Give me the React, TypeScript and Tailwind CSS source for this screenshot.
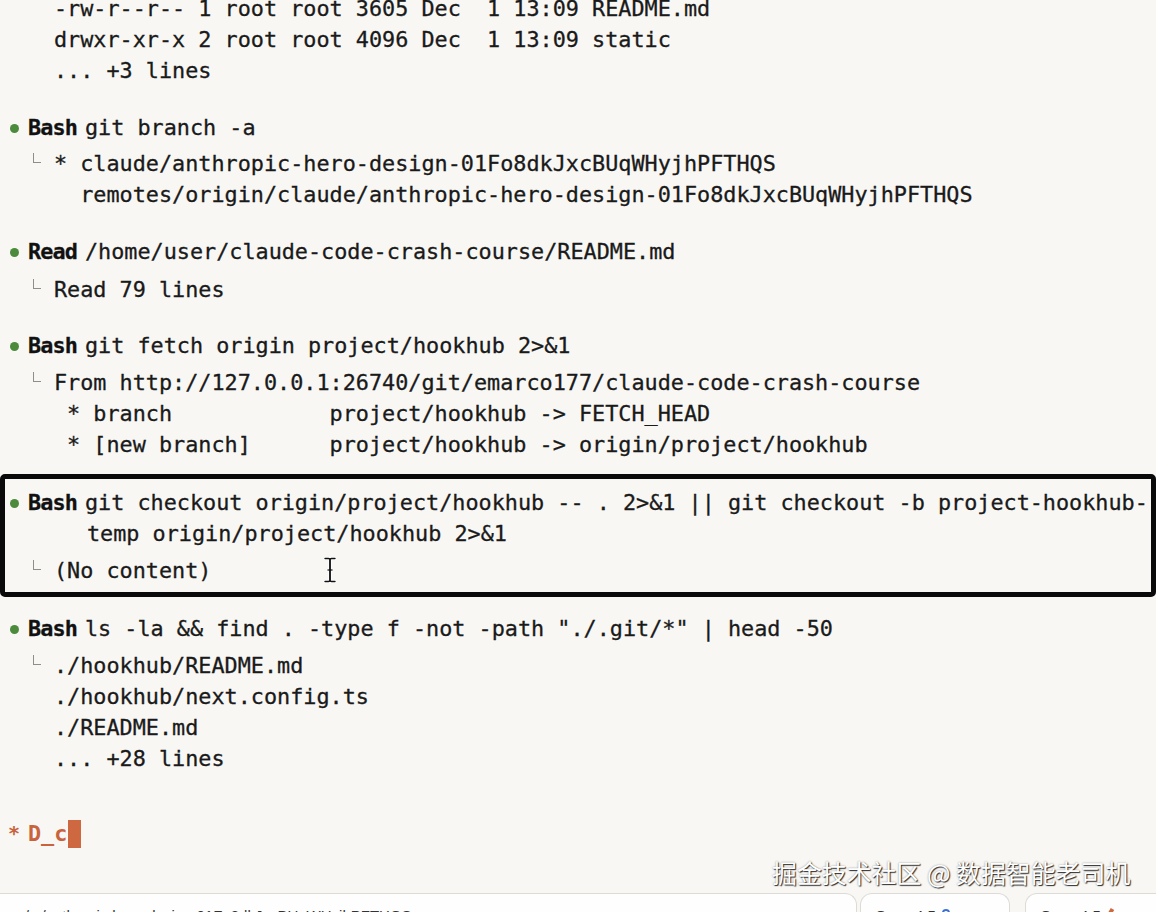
import React from "react";

type Line = { corner?: boolean; text: string };

function Corner({ show }: { show: boolean }) {
  return (
    <div className="w-[54px] shrink-0 self-stretch pl-[33px] pt-[5px]">
      {show ? <div className="h-[10px] w-[8px] border-b-[1.5px] border-l-[1.5px] border-[#8e8e8c]" /> : null}
    </div>
  );
}

function Out({ corner = false, text }: Line) {
  return (
    <div className="flex h-[31px] items-center">
      <Corner show={corner} />
      <span className="whitespace-pre">{text}</span>
    </div>
  );
}

function Header({ tool, cmd }: { tool: string; cmd: string }) {
  return (
    <div className="flex h-[31px] items-center">
      <div className="flex w-[28px] shrink-0 items-center pl-[10px] pt-[2px]">
        <span className="block h-[9px] w-[9px] rounded-full bg-[#4b8b3b]" />
      </div>
      <span className="font-bold tracking-[-0.9px] text-[#111]">{tool}</span>
      <span className="ml-[8px] whitespace-pre">{cmd}</span>
    </div>
  );
}

function IBeam() {
  return (
    <svg
      className="absolute left-[322px] top-[557px]"
      width="16"
      height="26"
      viewBox="0 0 16 26"
      fill="none"
    >
      <path d="M3 1.5 H6.5 Q8 1.5 8 3 V23 Q8 24.5 6.5 24.5 H3" stroke="#fff" strokeWidth="3" strokeLinecap="round" />
      <path d="M13 1.5 H9.5 Q8 1.5 8 3 V23 Q8 24.5 9.5 24.5 H13" stroke="#fff" strokeWidth="3" strokeLinecap="round" />
      <path d="M3 1.5 H6.5 Q8 1.5 8 3 V23 Q8 24.5 6.5 24.5 H3" stroke="#111" strokeWidth="1.4" strokeLinecap="round" />
      <path d="M13 1.5 H9.5 Q8 1.5 8 3 V23 Q8 24.5 9.5 24.5 H13" stroke="#111" strokeWidth="1.4" strokeLinecap="round" />
      <path d="M5.5 13 H10.5" stroke="#111" strokeWidth="1.2" />
    </svg>
  );
}

export default function App() {
  return (
    <div className="relative h-[912px] w-full overflow-hidden bg-[#f8f7f4] font-['DejaVu_Sans_Mono',monospace] text-[21.8px] leading-[31px] text-[#1a1a1a] [-webkit-text-stroke:0.3px_#1a1a1a]">
      <div className="flex flex-col">
        <div className="mt-[-7px]">
          <Out text="-rw-r--r-- 1 root root 3605 Dec  1 13:09 README.md" />
          <Out text="drwxr-xr-x 2 root root 4096 Dec  1 13:09 static" />
          <Out text="... +3 lines" />
        </div>

        <div className="mt-[26px]">
          <Header tool="Bash" cmd="git branch -a" />
          <div className="mt-[5px]">
            <Out corner text="* claude/anthropic-hero-design-01Fo8dkJxcBUqWHyjhPFTHQS" />
            <Out text="  remotes/origin/claude/anthropic-hero-design-01Fo8dkJxcBUqWHyjhPFTHQS" />
          </div>
        </div>

        <div className="mt-[26px]">
          <Header tool="Read" cmd="/home/user/claude-code-crash-course/README.md" />
          <div className="mt-[7px]">
            <Out corner text="Read 79 lines" />
          </div>
        </div>

        <div className="mt-[25px]">
          <Header tool="Bash" cmd="git fetch origin project/hookhub 2>&1" />
          <div className="mt-[6px]">
            <Out corner text="From http://127.0.0.1:26740/git/emarco177/claude-code-crash-course" />
            <Out text=" * branch            project/hookhub -> FETCH_HEAD" />
            <Out text=" * [new branch]      project/hookhub -> origin/project/hookhub" />
          </div>
        </div>

        <div className="mt-[14px] rounded-[5px] pb-[11px] pt-[13px] outline-[5px] outline-offset-[-5px] outline-[#0a0a0a]">
          <Header
            tool="Bash"
            cmd="git checkout origin/project/hookhub -- . 2>&1 || git checkout -b project-hookhub-"
          />
          <div className="flex h-[31px] items-center pl-[87px]">
            <span className="whitespace-pre">temp origin/project/hookhub 2&gt;&amp;1</span>
          </div>
          <div className="mt-[6px]">
            <Out corner text="(No content)" />
          </div>
        </div>

        <div className="mt-[16px]">
          <Header tool="Bash" cmd={'ls -la && find . -type f -not -path "./.git/*" | head -50'} />
          <div className="mt-[6px]">
            <Out corner text="./hookhub/README.md" />
            <Out text="./hookhub/next.config.ts" />
            <Out text="./README.md" />
            <Out text="... +28 lines" />
          </div>
        </div>

        <div className="mt-[44px] flex h-[31px] items-center text-[#c8633d] [-webkit-text-stroke:0px]">
          <span className="w-[28px] shrink-0 pl-[8px] text-[20px] font-bold">*</span>
          <span className="font-bold">D_c</span>
          <span className="ml-[1px] block h-[28px] w-[13px] bg-[#cd6840]" />
        </div>

        <div className="mt-[44px] flex h-[60px] font-['Liberation_Sans',sans-serif] text-[15px] leading-[20px] text-[#333] [-webkit-text-stroke:0px]">
          <div className="w-[857px] shrink-0 rounded-tr-[12px] border-r border-t border-[#dcdbd6] bg-[#fefefe] pl-[16px] pt-[12px]">
            ~/.../anthropic-hero-design-01Fo8dkJxcBUqWHyjhPFTHQS
          </div>
          <div className="ml-[3px] flex w-[150px] shrink-0 gap-[6px] rounded-t-[12px] border-x border-t border-[#dcdbd6] bg-[#fefefe] pl-[14px] pt-[12px]">
            <span>Opus 4.5</span>
            <span className="mt-[3px] block h-[14px] w-[8px] rounded-full border-2 border-[#3b6fd8]" />
          </div>
          <div className="ml-[15px] flex flex-1 gap-[6px] rounded-tl-[12px] border-l border-t border-[#dcdbd6] bg-[#fefefe] pl-[14px] pt-[12px]">
            <span>Opus 4.5</span>
            <span className="mt-[2px] block h-[14px] w-[4px] rotate-[30deg] bg-[#d0683f]" />
          </div>
        </div>
      </div>

      <IBeam />

      <div className="absolute left-[772px] top-[855px] font-['Noto_Sans_CJK_SC',sans-serif] text-[24.9px] leading-[34px] text-white [-webkit-text-stroke:0px] [text-shadow:1px_1px_1px_rgba(0,0,0,0.8),0_0_2px_rgba(0,0,0,0.4)]">
        掘金技术社区 @ 数据智能老司机
      </div>
    </div>
  );
}
